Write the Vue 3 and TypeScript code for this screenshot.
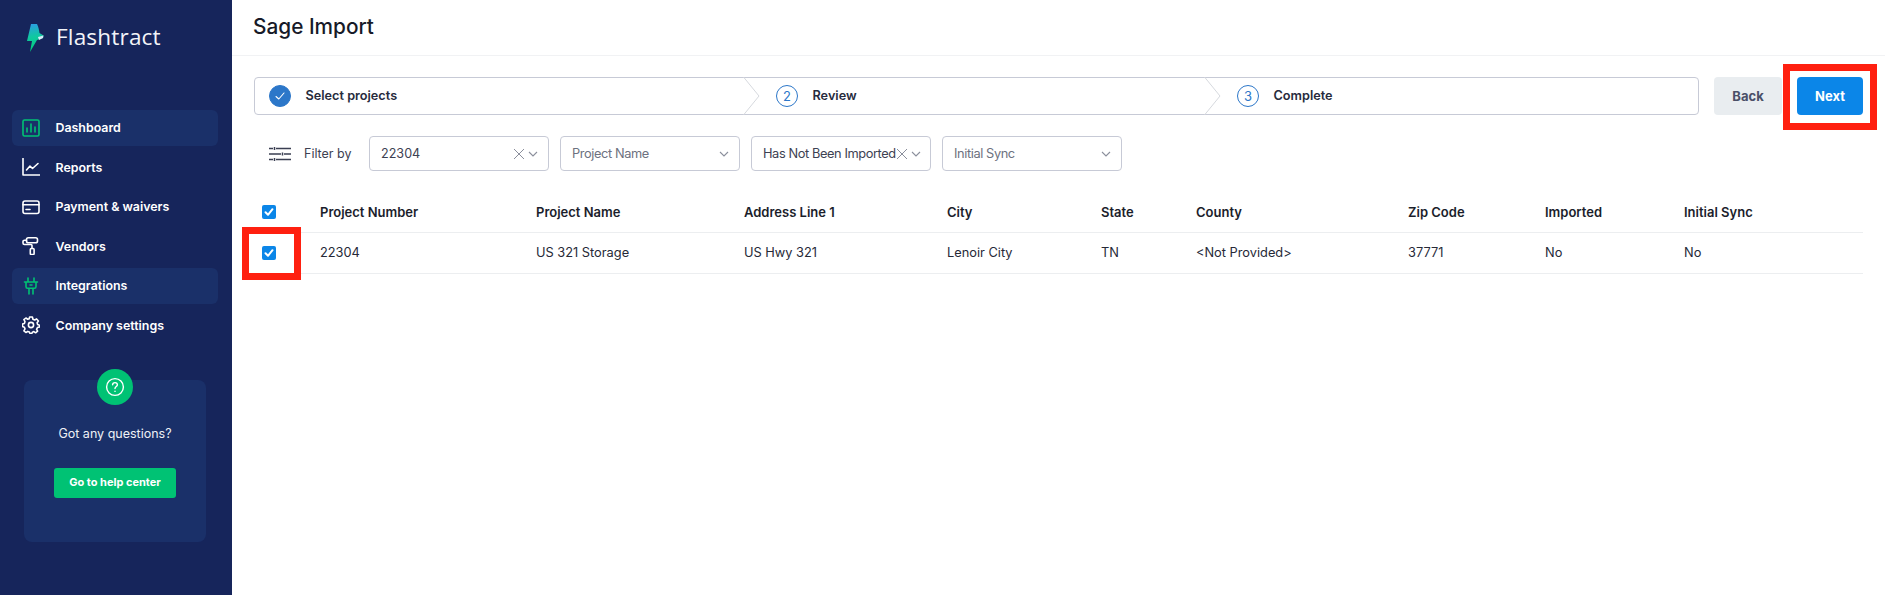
<script setup lang="ts">
interface NavItem { label: string; icon: string; active: boolean }
const nav: NavItem[] = [
  { label: 'Dashboard', icon: 'dash', active: true },
  { label: 'Reports', icon: 'chart', active: false },
  { label: 'Payment & waivers', icon: 'card', active: false },
  { label: 'Vendors', icon: 'roller', active: false },
  { label: 'Integrations', icon: 'plug', active: true },
  { label: 'Company settings', icon: 'gear', active: false },
]
const steps = [
  { label: 'Select projects', n: 0 },
  { label: 'Review', n: 2 },
  { label: 'Complete', n: 3 },
]
const filters = [
  { text: '22304', placeholder: false, clear: true, cls: 'f1' },
  { text: 'Project Name', placeholder: true, clear: false, cls: 'f2' },
  { text: 'Has Not Been Imported', placeholder: false, clear: true, cls: 'f3' },
  { text: 'Initial Sync', placeholder: true, clear: false, cls: 'f4' },
]
const headers = ['Project Number', 'Project Name', 'Address Line 1', 'City', 'State', 'County', 'Zip Code', 'Imported', 'Initial Sync']
const row = ['22304', 'US 321 Storage', 'US Hwy 321', 'Lenoir City', 'TN', '<Not Provided>', '37771', 'No', 'No']
</script>

<template>
  <div class="app">
    <aside class="side">
      <div class="logo">
        <svg class="bolt" viewBox="0 0 17 28" width="17" height="28">
          <defs>
            <linearGradient id="bg" x1="0.4" y1="0" x2="0.5" y2="1">
              <stop offset="0" stop-color="#2a9fe0" />
              <stop offset="0.45" stop-color="#10c8a0" />
              <stop offset="1" stop-color="#00d07a" />
            </linearGradient>
          </defs>
          <path d="M4 0H10C11.5 3 12 6 12.5 9L16.5 11.5 16 14 10 16 3 28 5 17H0Z" fill="url(#bg)" />
          <path d="M11 13L16.5 11.5 16 14 12 16Z" fill="#d6ecfa" />
        </svg>
        <span class="brand">Flashtract</span>
      </div>
      <nav class="nav">
        <div v-for="item in nav" :key="item.label" class="nav-item" :class="{ active: item.active }">
          <svg class="nav-icon" viewBox="0 0 18 18" width="18" height="18" fill="none" stroke="currentColor" stroke-width="1.6" stroke-linecap="round" stroke-linejoin="round">
            <template v-if="item.icon === 'dash'">
              <rect x="1" y="1" width="16" height="16" rx="1.5" />
              <path d="M5 13V9M9 13V5M13 13V8" />
            </template>
            <template v-else-if="item.icon === 'chart'">
              <path d="M1 0.5V17H17.5" />
              <path d="M4.5 12L8 8 10.5 10.5 16 5.5" />
            </template>
            <template v-else-if="item.icon === 'card'">
              <rect x="1" y="3" width="16" height="12.5" rx="2" />
              <path d="M1 6.8H17M4 11.5H8" />
            </template>
            <template v-else-if="item.icon === 'roller'">
              <rect x="4.5" y="0.8" width="11" height="5" rx="1.8" />
              <path d="M4.5 3.2H2.5C1.6 3.2 1 3.8 1 4.7V6C1 6.9 1.6 7.5 2.5 7.5H9C9.7 7.5 10 8 10 8.6V11.5" />
              <rect x="8.3" y="11.5" width="3.8" height="6" rx="1" />
            </template>
            <template v-else-if="item.icon === 'plug'">
              <path d="M6 1V5M12 1V5M2.5 5H15.5M4 5V9.5C4 10.5 4.6 11.2 5.5 11.2H12.5C13.4 11.2 14 10.5 14 9.5V5M7 11.2V17M11 11.2V17M8 8H10" />
            </template>
            <template v-else>
              <circle cx="9" cy="9" r="2.6" />
              <path d="M7.6 1H10.4L10.9 3.2 12.7 4 14.6 2.9 16.4 5 15.1 6.8 15.6 8.6 17.5 9.3V11L15.4 11.6 14.6 13.4 15.6 15.2 13.6 16.8 11.9 15.6 10.4 16.2 9.8 17.5H8L7.4 16 5.8 15.4 3.9 16.5 1.9 14.8 3 12.9 2.4 11.3.5 10.6V8L2.4 7.4 3 5.6 1.9 3.7 3.9 2 5.8 3.2 7.2 2.8Z" />
            </template>
          </svg>
          <span>{{ item.label }}</span>
        </div>
      </nav>
      <div class="help">
        <div class="help-badge">
          <svg viewBox="0 0 20 20" width="20" height="20" fill="none" stroke="#fff" stroke-width="1.4" stroke-linecap="round">
            <circle cx="10" cy="10" r="8.4" />
            <path d="M7.6 7.8C7.6 6.4 8.7 5.6 10 5.6S12.4 6.5 12.4 7.8C12.4 9.5 10 9.6 10 11.6" />
            <path d="M10 14.2V14.4" />
          </svg>
        </div>
        <p class="help-text">Got any questions?</p>
        <button class="help-btn">Go to help center</button>
      </div>
    </aside>

    <main class="main">
      <header class="top"><h1>Sage Import</h1></header>

      <div class="content">
        <div class="step-row">
          <div class="stepper">
            <div v-for="(s, i) in steps" :key="s.label" class="step" :class="`s${i}`">
              <span v-if="s.n === 0" class="dot done">
                <svg viewBox="0 0 12 12" width="12" height="12" fill="none" stroke="#fff" stroke-width="1.1" stroke-linecap="round" stroke-linejoin="round"><path d="M2 6.5L4.8 9 10 3" /></svg>
              </span>
              <span v-else class="dot">{{ s.n }}</span>
              <span class="step-label">{{ s.label }}</span>
              <svg v-if="i < 2" class="chev" viewBox="0 0 17 38" width="17" height="38" fill="none" stroke="#d6d9de"><path d="M0.5 0L16 19 0.5 38" /></svg>
            </div>
          </div>
          <button class="btn back">Back</button>
          <button class="btn next">Next</button>
        </div>

        <div class="filters">
          <svg class="sliders" viewBox="0 0 22 14" width="22" height="14" fill="none" stroke="#3a3f52" stroke-width="1.5">
            <path d="M0 1.5H4M7 1.5H22M0 7H12M15 7H22M0 12.5H4M7 12.5H22" />
            <path d="M5.5 0V3M13.5 5.5V8.5M5.5 11V14" />
          </svg>
          <span class="filter-label">Filter by</span>
          <div v-for="f in filters" :key="f.text" class="select" :class="[f.cls, { ph: f.placeholder }]">
            <span class="select-text">{{ f.text }}</span>
            <svg v-if="f.clear" class="x" viewBox="0 0 12 12" width="12" height="12" fill="none" stroke="#8b8f9c" stroke-width="1"><path d="M1 1L11 11M11 1L1 11" /></svg>
            <svg class="caret" viewBox="0 0 10 6" width="10" height="6" fill="none" stroke="#8b8f9c" stroke-width="1.1"><path d="M1 1L5 5 9 1" /></svg>
          </div>
        </div>

        <div class="table">
          <div class="tr th">
            <span class="cell-check"><span class="check"><svg viewBox="0 0 14 14" width="14" height="14" fill="none" stroke="#fff" stroke-width="2" stroke-linecap="round" stroke-linejoin="round"><path d="M3.5 7.3L6 9.8 10.5 4.2" /></svg></span></span>
            <span v-for="h in headers" :key="h">{{ h }}</span>
          </div>
          <div class="tr td">
            <span class="cell-check"><span class="check"><svg viewBox="0 0 14 14" width="14" height="14" fill="none" stroke="#fff" stroke-width="2" stroke-linecap="round" stroke-linejoin="round"><path d="M3.5 7.3L6 9.8 10.5 4.2" /></svg></span></span>
            <span v-for="(c, i) in row" :key="i" class="cell">{{ c }}</span>
          </div>
        </div>
      </div>
    </main>
    <div class="mark mark-next"></div>
    <div class="mark mark-row"></div>
  </div>
</template>

<style>
html, body { margin: 0; background: #fff; }
</style>

<style scoped>
.app {
  position: relative;
  display: flex;
  width: 1885px;
  height: 595px;
  overflow: hidden;
  font-family: Inter, "Liberation Sans", sans-serif;
  color: #1b1e2b;
  background: #fff;
}
.side {
  width: 232px;
  flex: none;
  background: #16255b;
  color: #fff;
  display: flex;
  flex-direction: column;
}
.logo {
  display: flex;
  align-items: center;
  height: 28px;
  margin-top: 24px;
  padding-left: 27px;
  gap: 12px;
}
.bolt { flex: none; }
.brand {
  font-family: "Open Sans", sans-serif;
  font-size: 22.6px;
  letter-spacing: 0.15px;
  color: #f2f4f8;
  padding-bottom: 4px;
}
.nav {
  display: flex;
  flex-direction: column;
  gap: 3.6px;
  margin: 58px 14px 0 12px;
}
.nav-item {
  display: flex;
  align-items: center;
  gap: 15.5px;
  height: 36px;
  box-sizing: border-box;
  padding: 0 0 1px 10px;
  border-radius: 6px;
  font-size: 12.4px;
  font-weight: 600;
}
.nav-item.active { background: #1a3069; }
.nav-item.active .nav-icon { color: #00c274; }
.nav-icon { flex: none; color: #fff; }
.help {
  position: relative;
  margin: 36px 26px 0 24px;
  height: 162px;
  background: #1a3069;
  border-radius: 8px;
  display: flex;
  flex-direction: column;
  align-items: center;
}
.help-badge {
  position: absolute;
  top: -11px;
  left: 73px;
  width: 36px;
  height: 36px;
  border-radius: 50%;
  background: #00c274;
  display: flex;
  align-items: center;
  justify-content: center;
}
.help-text {
  margin: 45px 0 0;
  font-size: 12.5px;
  line-height: 18px;
  color: #eef0f6;
}
.help-btn {
  margin-top: 25px;
  width: 122px;
  height: 30px;
  border: 0;
  border-radius: 3px;
  background: #00c274;
  color: #fff;
  font: 700 11px Inter, sans-serif;
  padding-bottom: 2px;
}
.main {
  flex: 1;
  min-width: 0;
}
.top {
  height: 56px;
  box-sizing: border-box;
  border-bottom: 1px solid #f1f2f4;
  padding-left: 21px;
}
.top h1 {
  margin: 0;
  font-size: 20.8px;
  font-weight: 500;
  line-height: 53px;
  color: #171a28;
}
.content { padding: 21px 22px 0 22px; }
.step-row {
  display: flex;
  align-items: stretch;
  height: 38px;
}
.stepper {
  width: 1445px;
  box-sizing: border-box;
  display: grid;
  grid-template-columns: 489px 461px 1fr;
  border: 1px solid #c7cad6;
  border-radius: 4px;
}
.step {
  position: relative;
  display: flex;
  align-items: center;
  padding-left: 32px;
}
.step.s0 { padding-left: 14px; }
.dot {
  width: 22px;
  height: 22px;
  box-sizing: border-box;
  border: 1px solid #2c77c9;
  border-radius: 50%;
  display: flex;
  align-items: center;
  justify-content: center;
  font-size: 13px;
  color: #2c77c9;
  flex: none;
}
.dot.done { background: #2c77c9; }
.step-label {
  margin-left: 14.5px;
  padding-bottom: 1px;
  font-size: 12.7px;
  font-weight: 600;
  color: #272b3d;
}
.chev {
  position: absolute;
  top: -1px;
  right: -16px;
  z-index: 1;
}
.btn {
  height: 38px;
  border: 0;
  border-radius: 4px;
  font: 700 13px Inter, sans-serif;
}
.back {
  width: 68px;
  margin-left: 15px;
  background: #e9edf0;
  color: #4a5068;
}
.next {
  width: 66px;
  margin-left: 15px;
  background: #0b86e8;
  color: #fff;
}
.filters {
  display: flex;
  align-items: center;
  margin-top: 21px;
  height: 35px;
}
.sliders { margin-left: 15px; flex: none; }
.filter-label {
  margin: 0 19px 0 13px;
  font-size: 12.5px;
  color: #3d4152;
  width: 46px;
  white-space: nowrap;
}
.select {
  box-sizing: border-box;
  width: 180px;
  height: 35px;
  margin-right: 11px;
  display: flex;
  align-items: center;
  padding: 0 10px 0 11px;
  border: 1px solid #c7cad6;
  border-radius: 4px;
  font-size: 12.8px;
  letter-spacing: -0.4px;
  color: #3d4152;
}
.select.ph { color: #6d7180; }
.f1 { font-size: 12.6px; letter-spacing: 0; }
.select-text { flex: 1; white-space: nowrap; }
.x { flex: none; margin-right: 1px; }
.caret { flex: none; margin-left: 2px; }
.table { margin-top: 21px; }
.tr {
  display: grid;
  grid-template-columns: 66px 216px 208px 203px 154px 95px 212px 137px 139px 1fr;
  align-items: center;
  border-bottom: 1px solid #eceef0;
  font-size: 13px;
}
.th { height: 40px; font-weight: 600; color: #1b1e2b; }
.td { height: 40px; font-size: 12.8px; color: #262937; }
.cell { padding-bottom: 1px; }
.cell-check { display: flex; padding-left: 8px; }
.check {
  width: 14px;
  height: 14px;
  border-radius: 2px;
  background: #0b86e8;
  display: flex;
}
.mark {
  position: absolute;
  box-sizing: border-box;
  border: 7px solid #ff2010;
  pointer-events: none;
}
.mark-next { left: 1783px; top: 64px; width: 94px; height: 66px; }
.mark-row { left: 242px; top: 227px; width: 59px; height: 53px; }
</style>
